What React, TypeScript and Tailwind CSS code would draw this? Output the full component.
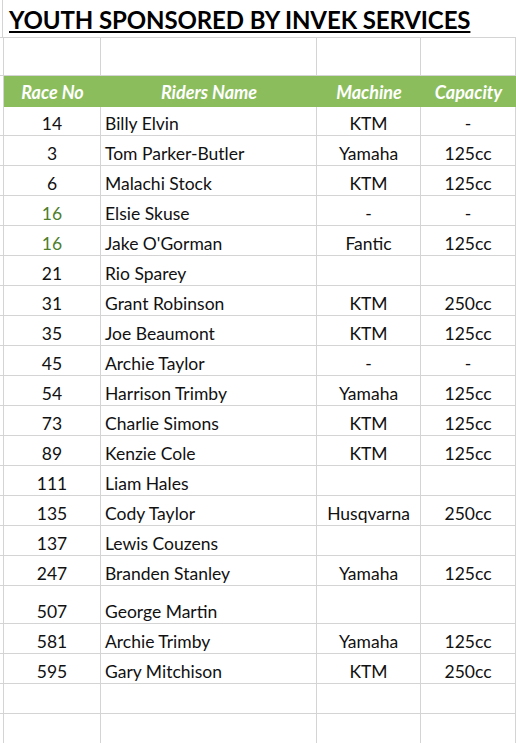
type Rider = { no: string; name: string; machine: string; cap: string; green?: boolean; tall?: boolean }

const riders: Rider[] = [
  { no: '14', name: 'Billy Elvin', machine: 'KTM', cap: '-' },
  { no: '3', name: 'Tom Parker-Butler', machine: 'Yamaha', cap: '125cc' },
  { no: '6', name: 'Malachi Stock', machine: 'KTM', cap: '125cc' },
  { no: '16', name: 'Elsie Skuse', machine: '-', cap: '-', green: true },
  { no: '16', name: "Jake O'Gorman", machine: 'Fantic', cap: '125cc', green: true },
  { no: '21', name: 'Rio Sparey', machine: '', cap: '' },
  { no: '31', name: 'Grant Robinson', machine: 'KTM', cap: '250cc' },
  { no: '35', name: 'Joe Beaumont', machine: 'KTM', cap: '125cc' },
  { no: '45', name: 'Archie Taylor', machine: '-', cap: '-' },
  { no: '54', name: 'Harrison Trimby', machine: 'Yamaha', cap: '125cc' },
  { no: '73', name: 'Charlie Simons', machine: 'KTM', cap: '125cc' },
  { no: '89', name: 'Kenzie Cole', machine: 'KTM', cap: '125cc' },
  { no: '111', name: 'Liam Hales', machine: '', cap: '' },
  { no: '135', name: 'Cody Taylor', machine: 'Husqvarna', cap: '250cc' },
  { no: '137', name: 'Lewis Couzens', machine: '', cap: '' },
  { no: '247', name: 'Branden Stanley', machine: 'Yamaha', cap: '125cc' },
  { no: '507', name: 'George Martin', machine: '', cap: '', tall: true },
  { no: '581', name: 'Archie Trimby', machine: 'Yamaha', cap: '125cc' },
  { no: '595', name: 'Gary Mitchison', machine: 'KTM', cap: '250cc' },
]

function Row({ r, h }: { r?: Rider; h: string }) {
  return (
    <div className={`flex ${h} border-b border-[#d4d4d4]`}>
      <div className="w-[3px] shrink-0" />
      <div className="w-[98px] shrink-0 border-x border-[#d4d4d4] flex items-end justify-center pb-[1px]">
        <span className={r?.green ? 'text-[#4e7d2c]' : ''}>{r?.no}</span>
      </div>
      <div className="w-[216px] shrink-0 border-r border-[#d4d4d4] flex items-end pl-[4px] pb-[1px]">{r?.name}</div>
      <div className="w-[104px] shrink-0 border-r border-[#d4d4d4] flex items-end justify-center pb-[1px]">{r?.machine}</div>
      <div className="w-[95px] shrink-0 border-r border-[#d4d4d4] flex items-end justify-center pb-[1px]">{r?.cap}</div>
    </div>
  )
}

export default function App() {
  return (
    <div className="w-[516px] h-[743px] overflow-hidden bg-white text-[17.5px] leading-[21px] text-[#111] font-['Lato',sans-serif]">
      <div className="flex h-[38px] border-b border-[#d4d4d4]">
        <div className="w-[3px] shrink-0 border-r border-[#d4d4d4]" />
        <div className="pl-[6px] pt-[6px] text-[24px] font-bold leading-[28px] underline underline-offset-[2px] decoration-2 text-black tracking-[-0.1px]">
          YOUTH SPONSORED BY INVEK SERVICES
        </div>
      </div>
      <Row h="h-[38px]" />
      <div className="flex h-[31px]">
        <div className="w-[4px] shrink-0 border-r border-[#d4d4d4]" />
        <div className="flex flex-1 bg-[#8bbd5c] text-white text-[18px] font-bold italic items-center pt-[1px]">
          <div className="w-[97px] text-center">Race No</div>
          <div className="w-[216px] text-center">Riders Name</div>
          <div className="w-[104px] text-center">Machine</div>
          <div className="w-[95px] text-center">Capacity</div>
        </div>
      </div>
      {riders.map((r, i) => (
        <Row key={i} r={r} h={i === 0 ? 'h-[29px]' : r.tall ? 'h-[38px]' : 'h-[30px]'} />
      ))}
      <Row h="h-[30px]" />
      <Row h="h-[30px]" />
    </div>
  )
}
